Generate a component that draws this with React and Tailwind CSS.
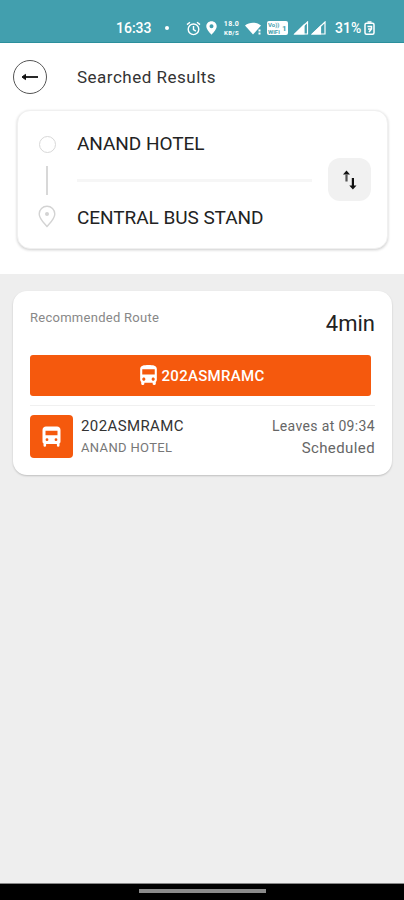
import React from "react";

const route = {
  from: "ANAND HOTEL",
  to: "CENTRAL BUS STAND",
  duration: "4min",
  bus: "202ASMRAMC",
  leavesAt: "Leaves at 09:34",
  status: "Scheduled",
};

function BusIcon({ className }) {
  return (
    <svg viewBox="0 0 24 24" fill="currentColor" className={className}>
      <path d="M4 16c0 .88.39 1.67 1 2.22V20c0 .55.45 1 1 1h1c.55 0 1-.45 1-1v-1h8v1c0 .55.45 1 1 1h1c.55 0 1-.45 1-1v-1.78c.61-.55 1-1.34 1-2.22V6c0-3.5-3.58-4-8-4s-8 .5-8 4v10zm3.5 1c-.83 0-1.5-.67-1.5-1.5S6.67 14 7.5 14s1.5.67 1.5 1.5S8.33 17 7.5 17zm9 0c-.83 0-1.5-.67-1.5-1.5s.67-1.5 1.5-1.5 1.5.67 1.5 1.5-.67 1.5-1.5 1.5zm1.5-6H6V6h12v5z" />
    </svg>
  );
}

function BusStopIcon({ className }) {
  return (
    <svg viewBox="0 0 19 21" fill="currentColor" fillRule="evenodd" className={className}>
      <path d="M4 .5h11c2 0 3.500 1.500 3.500 3.500v11.500c0 1-.4 1.500-1 2V19.500a1.300 1.300 0 0 1-2.600 0V18H4.100v1.500a1.300 1.300 0 0 1-2.600 0v-2c-.6-.5-1-1-1-2V4C.5 2 2 .5 4 .5zM3.500 4.700v4.500h12V4.700zM5 12.300a1.400 1.400 0 1 0 0 2.800 1.400 1.400 0 0 0 0-2.800zM14 12.300a1.400 1.400 0 1 0 0 2.800 1.400 1.400 0 0 0 0-2.800z" />
    </svg>
  );
}

function StatusBar() {
  return (
    <div className="flex h-[43px] shrink-0 items-center border-b border-[#2b8f9c] bg-[#429fae] pl-[116px] pt-[14px] text-white">
      <span className="w-[36px] text-[14px] font-medium leading-none">16:33</span>
      <span className="ml-[13px] size-[4px] rounded-full bg-white" />
      {/* Alarm */}
      <svg className="ml-[17px] size-[15px] shrink-0" viewBox="0 0 15 15" fill="none" stroke="currentColor" strokeWidth="1.400">
        <circle cx="7.500" cy="8.300" r="5.300" />
        <path d="M7.500 5v3.600l2.400 1.500M1 3.600 4 1.200M14 3.600 11 1.200" />
      </svg>
      {/* Location */}
      <svg className="ml-[5px] h-[14px] w-[11px] shrink-0" viewBox="0 0 11 14" fill="currentColor" fillRule="evenodd">
        <path d="M5.500.3C2.500.3.300 2.500.300 5.300c0 3.600 5.200 8.400 5.200 8.400s5.200-4.800 5.200-8.400C10.700 2.500 8.500.3 5.500.3zm0 6.900a2 2 0 1 1 0-4 2 2 0 0 1 0 4z" />
      </svg>
      <div className="ml-[5px] w-[19px] text-center text-[7px] font-bold leading-[9px] tracking-[0.300px]">
        <div className="h-[8px]">18.0</div>
        <div className="h-[8px] text-[6px]">KB/S</div>
      </div>
      {/* Wifi */}
      <svg className="ml-[4px] h-[13px] w-[17px] shrink-0" viewBox="0 0 17 13" fill="currentColor">
        <path d="M0 3.500C4.300-.3 11.700-.3 16 3.500L8 12.500z" />
        <path d="M13.500 7.500h2v2h-2zM13.500 10.500h2v2h-2z" />
      </svg>
      <div className="ml-[5px] flex h-[14px] w-[21px] shrink-0 items-center rounded-[2px] bg-white pl-px text-[6px] font-bold leading-[7px] text-[#429fae]">
        <div className="w-[14px]">
          <div>Vo))</div>
          <div>WiFi</div>
        </div>
        <span className="text-[8px]">1</span>
      </div>
      {/* Signal strength */}
      <svg className="ml-[5px] h-[14px] w-[33px] shrink-0" viewBox="0 0 33 14" fill="none" stroke="currentColor" strokeWidth="1.200">
        <path d="M14.500 1v12H2z" />
        <path d="M11 4v9H2z" fill="currentColor" />
        <path d="M32 1v12H19.500z" />
        <path d="M27.500 5.500v7.500h-8z" fill="currentColor" />
      </svg>
      <span className="ml-[9px] w-[27px] text-[14px] font-medium leading-none">31%</span>
      {/* Battery */}
      <svg className="ml-[2px] h-[14px] w-[11px] shrink-0" viewBox="0 0 11 14" fill="none" stroke="currentColor" strokeWidth="1.500">
        <rect x="1" y="2.200" width="9" height="11" rx="1.500" />
        <path d="M3.500 1h4M3.500 5.500h4v2.500l-2.500 3M4 8h3" />
      </svg>
    </div>
  );
}

function Header() {
  return (
    <div className="flex h-[67px] items-center">
      <button className="ml-[13px] flex size-[34px] items-center justify-center rounded-full border border-[#555]">
        <svg className="h-[8px] w-[18px]" viewBox="0 0 18 8" fill="#111" stroke="#111">
          <path d="M3 4h14" strokeWidth="1.800" />
          <path d="M1 4l3.500-2.600v5.200z" />
        </svg>
      </button>
      <h1 className="ml-[30px] mt-[2px] text-[17px] tracking-[0.500px] text-[#333]">Searched Results</h1>
    </div>
  );
}

function SearchCard() {
  return (
    <div className="ml-[17px] mr-4 flex h-[139px] rounded-[13px] border border-[#f0f0f0] bg-white shadow-[0_1px_3px_rgba(0,0,0,0.2)]">
      <div className="ml-[20px] flex w-[18px] flex-col items-center pt-[25px]">
        <span className="size-[17px] rounded-full border-[1.500px] border-[#d8d8d8]" />
        <span className="mt-[13px] h-[29px] w-[2px] bg-[#d8d8d8]" />
        <svg className="mt-[10px] h-[23px] w-[18px] shrink-0" viewBox="0 0 18 23" fill="none" stroke="#d3d3d3" strokeWidth="1.400">
          <path d="M9 21.500C6.500 18.500 1.200 14 1.200 9a7.800 7.800 0 0 1 15.600 0c0 5-5.300 9.500-7.800 12.500z" />
          <circle cx="9" cy="9" r="1.300" fill="#d3d3d3" />
        </svg>
      </div>
      <div className="ml-[21px] flex w-[235px] flex-col text-[19px] leading-[24px] tracking-[-0.050px] text-[#222]">
        <span className="mt-[21px]">{route.from}</span>
        <span className="mt-[23px] h-[3px] bg-[#f6f6f6]" />
        <span className="mt-[24px] whitespace-nowrap">{route.to}</span>
      </div>
      <button className="ml-[16px] mt-[47px] flex size-[43px] items-center justify-center rounded-[12px] bg-[#f1f1f1]">
        <svg className="h-[20px] w-[15px]" viewBox="0 0 15 20" fill="#111">
          <path d="M4.500.5 8 4.500H1z" />
          <path d="M3.400 4.500h2.200v7H3.400z" fill="#555" />
          <path d="M10.900 19.500 7.300 15.500h2.500V8h2.200v7.500h2.500z" />
        </svg>
      </button>
    </div>
  );
}

function RouteCard() {
  return (
    <div className="ml-[13px] mr-3 mt-[17px] h-[184px] rounded-[14px] bg-white px-[17px] shadow-[0_1px_2px_rgba(0,0,0,0.2)]">
      <div className="flex h-[64px] justify-between">
        <span className="mt-[18px] text-[13px] leading-[18px] tracking-[0.270px] text-[#888]">Recommended Route</span>
        <span className="mt-[20px] text-[22px] leading-[26px] text-[#222]">{route.duration}</span>
      </div>
      <div className="mr-1 flex h-[41px] items-center justify-center rounded-[3px] bg-[#f5590d] text-white">
        <BusIcon className="size-[25px]" />
        <span className="mt-[2px] text-[15px] font-medium tracking-[0.300px]">{route.bus}</span>
      </div>
      <div className="mt-[9px] h-px bg-[#f0f0f0]" />
      <div className="mt-[9px] flex h-[43px]">
        <div className="flex size-[43px] shrink-0 items-center justify-center rounded-[4px] bg-[#f5590d] text-white">
          <BusStopIcon className="h-[21px] w-[19px]" />
        </div>
        <div className="ml-[8px] flex flex-1 flex-col">
          <span className="text-[15px] leading-[22px] tracking-[0.400px] text-[#333]">{route.bus}</span>
          <span className="text-[13px] leading-[22px] tracking-[0.350px] text-[#777]">{route.from}</span>
        </div>
        <div className="flex flex-col text-right leading-[22px] text-[#666]">
          <span className="text-[14px] tracking-[0.350px]">{route.leavesAt}</span>
          <span className="text-[15px] tracking-[0.400px]">{route.status}</span>
        </div>
      </div>
    </div>
  );
}

export default function App() {
  return (
    <div className="flex h-[900px] w-[404px] flex-col overflow-hidden bg-[#eee] font-['Roboto',sans-serif]">
      <StatusBar />
      <div className="h-[231px] shrink-0 bg-white">
        <Header />
        <SearchCard />
      </div>
      <main className="flex-1">
        <RouteCard />
      </main>
      <div className="flex h-[17px] shrink-0 justify-center border-t border-[#888] bg-black pt-[5px]">
        <span className="h-[4px] w-[127px] bg-[#8a8a8a]" />
      </div>
    </div>
  );
}
